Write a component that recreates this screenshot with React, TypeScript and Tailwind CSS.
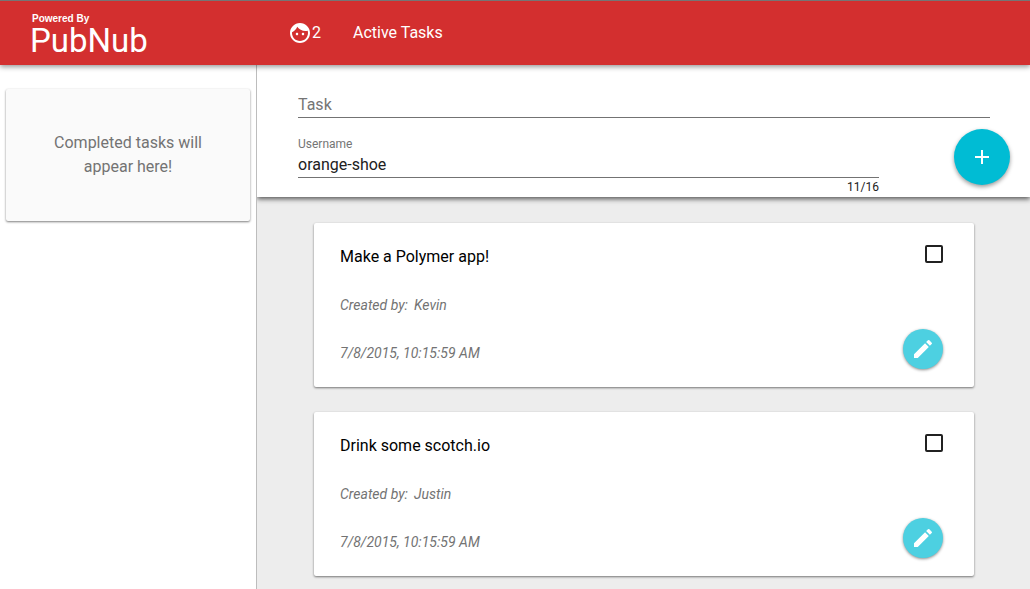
import { useState } from "react";
import { MdAdd, MdEdit } from "react-icons/md";

type Task = { id: string; title: string; author: string; date: string };

const initialTasks: Task[] = [
  { id: "polymer", title: "Make a Polymer app!", author: "Kevin", date: "7/8/2015, 10:15:59 AM" },
  { id: "scotch", title: "Drink some scotch.io", author: "Justin", date: "7/8/2015, 10:15:59 AM" },
];

const MAX_USERNAME = 16;

function FaceIcon() {
  return (
    <svg viewBox="0 0 24 24" className="size-6 fill-current" aria-hidden="true">
      <path d="M9 11.75c-.69 0-1.25.56-1.25 1.25s.56 1.25 1.25 1.25 1.25-.56 1.25-1.25-.56-1.25-1.25-1.25zm6 0c-.69 0-1.25.56-1.25 1.25s.56 1.25 1.25 1.25 1.25-.56 1.25-1.25-.56-1.25-1.25-1.25zM12 2C6.48 2 2 6.48 2 12s4.48 10 10 10 10-4.48 10-10S17.52 2 12 2zm0 18c-4.41 0-8-3.59-8-8 0-.29.02-.58.05-.86 2.36-1.05 4.23-2.98 5.21-5.37C11.07 8.33 14.05 10 17.42 10c.78 0 1.53-.09 2.25-.26.21.71.33 1.47.33 2.26 0 4.41-3.59 8-8 8z" />
    </svg>
  );
}

function Header() {
  return (
    <header className="relative z-20 flex border-t border-[#757575] bg-[#d32f2f] text-white shadow-[0_2px_5px_rgba(0,0,0,0.4)]">
      <div className="h-16 w-64 shrink-0 pl-[30px] pt-3">
        <p className="pl-0.5 font-['Liberation_Sans',sans-serif] text-[10px] font-bold leading-3">Powered By</p>
        <p className="text-[33px] leading-8">PubNub</p>
      </div>
      <div className="flex items-center pl-8">
        <FaceIcon />
        <span>2</span>
        <h1 className="pl-8">Active Tasks</h1>
      </div>
    </header>
  );
}

function TaskCard({ task }: { task: Task }) {
  return (
    <li className="flex justify-between rounded-xs bg-white pb-[18px] pl-[26px] pr-[31px] pt-[22px] shadow-[0_1px_3px_rgba(0,0,0,0.2),0_1px_2px_rgba(0,0,0,0.35)]">
      <div className="flex flex-col gap-6 pb-1 text-sm leading-6 text-[#737373] italic">
        <label htmlFor={task.id} className="text-base leading-6 text-black not-italic">
          {task.title}
        </label>
        <p>
          Created by:<span className="pl-1.5">{task.author}</span>
        </p>
        <p>{task.date}</p>
      </div>
      <div className="flex flex-col items-end justify-between">
        <input
          id={task.id}
          type="checkbox"
          className="size-[18px] appearance-none rounded-xs border-2 border-[#212121] checked:bg-[#212121]"
        />
        <button
          type="button"
          aria-label={`Edit ${task.title}`}
          className="flex size-10 items-center justify-center rounded-full bg-[#4dd0e1] text-white shadow-[0_1px_3px_rgba(0,0,0,0.45)]"
        >
          <MdEdit className="size-6" />
        </button>
      </div>
    </li>
  );
}

export default function App() {
  const [username, setUsername] = useState("orange-shoe");
  const [draft, setDraft] = useState("");
  const [tasks, setTasks] = useState(initialTasks);

  function addTask() {
    if (!draft.trim()) return;
    const now = new Date();
    setTasks([{ id: `task-${now.getTime()}`, title: draft, author: username, date: now.toLocaleString("en-US") }, ...tasks]);
    setDraft("");
  }

  return (
    <div className="flex min-h-screen flex-col bg-white font-['Roboto',sans-serif] text-base text-[#212121]">
      <Header />
      <div className="flex flex-1">
        <aside className="w-[257px] shrink-0 border-r border-[#bdbdbd] px-1.5 pt-6">
          <p className="rounded-xs bg-[#fafafa] px-10 py-[42px] text-center leading-6 text-[#737373] shadow-[0_1px_3px_rgba(0,0,0,0.2),0_1px_2px_rgba(0,0,0,0.35)]">
            Completed tasks will appear here!
          </p>
        </aside>
        <main className="min-w-0 flex-1 overflow-clip bg-[#ededed]">
          <form
            className="bg-white pl-[41px] pr-5 pt-[27px] shadow-[0_2px_5px_rgba(0,0,0,0.65)]"
            onSubmit={(e) => {
              e.preventDefault();
              addTask();
            }}
          >
            <div className="mr-5">
              <input
                aria-label="Task"
                placeholder="Task"
                value={draft}
                onChange={(e) => setDraft(e.target.value)}
                className="block h-[26px] w-full border-b border-[#737373] outline-none placeholder:text-[#757575]"
              />
            </div>
            <div className="flex items-start gap-[75px] pt-[11px]">
              <div className="flex-1 pt-[7px]">
                <label htmlFor="username" className="block text-xs leading-4 text-[#757575]">
                  Username
                </label>
                <input
                  id="username"
                  value={username}
                  maxLength={MAX_USERNAME}
                  onChange={(e) => setUsername(e.target.value)}
                  className="block h-[26px] w-full border-b border-[#737373] outline-none"
                />
                <p className="text-right text-xs leading-[19px]">
                  {username.length}/{MAX_USERNAME}
                </p>
              </div>
              <button
                type="submit"
                aria-label="Add task"
                className="flex size-14 items-center justify-center rounded-full bg-[#00bcd4] text-white shadow-[0_2px_4px_rgba(0,0,0,0.4)]"
              >
                <MdAdd className="size-6" />
              </button>
            </div>
          </form>
          <ul className="flex flex-col gap-[25px] pb-3 pl-[57px] pr-14 pt-[26px]">
            {tasks.map((task) => (
              <TaskCard key={task.id} task={task} />
            ))}
          </ul>
        </main>
      </div>
    </div>
  );
}
